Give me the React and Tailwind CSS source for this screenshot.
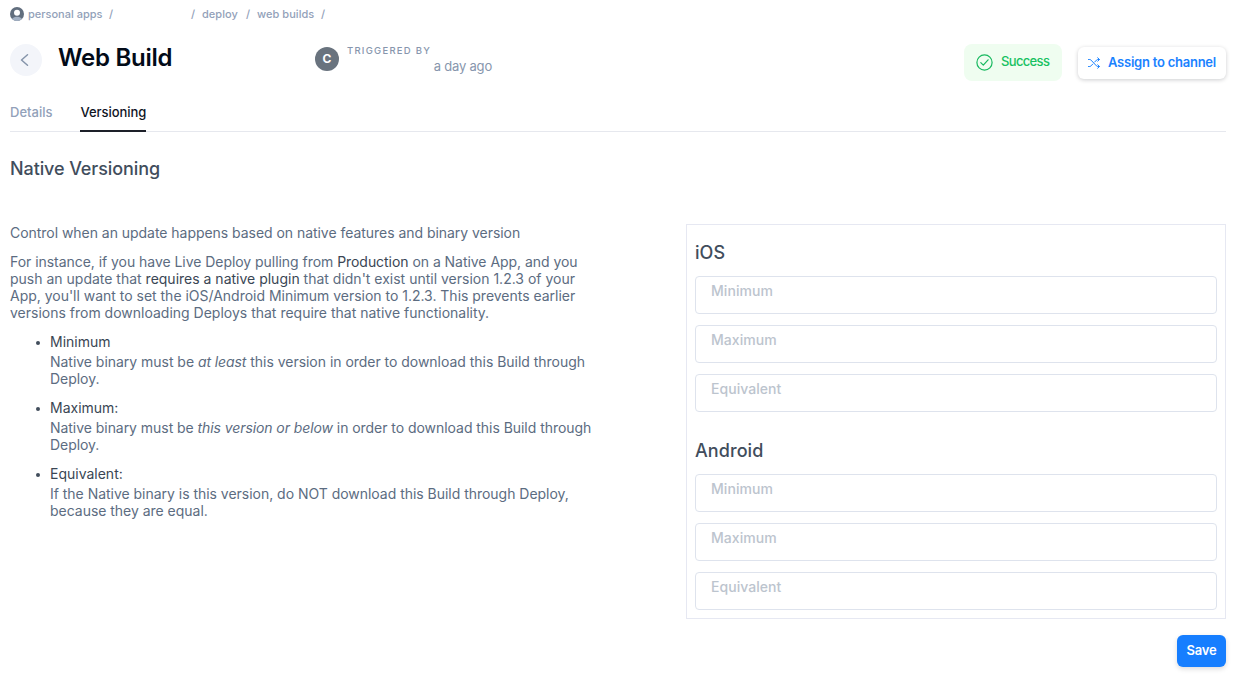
const inputs = ["Minimum", "Maximum", "Equivalent"];

const notes = [
  { title: "Minimum", tracking: "tracking-[-0.03px]", lines: [["Native binary must be ", "at least", " this version in order to download this Build through"], ["Deploy."]] },
  { title: "Maximum:", tracking: "tracking-[-0.045px]", lines: [["Native binary must be ", "this version or below", " in order to download this Build through"], ["Deploy."]] },
  { title: "Equivalent:", tracking: "tracking-[-0.025px]", lines: [["If the Native binary is this version, do NOT download this Build through Deploy,"], ["because they are equal."]] },
];

function UserIcon() {
  return (
    <svg width="14" height="14" viewBox="0 0 14 14" className="mr-1">
      <defs>
        <clipPath id="avatar"><circle cx="7" cy="7" r="7" /></clipPath>
      </defs>
      <g clipPath="url(#avatar)">
        <rect width="14" height="14" fill="#616e7e" />
        <ellipse cx="7" cy="13.2" rx="5.2" ry="3.4" fill="#a3b1c4" />
        <circle cx="7" cy="5.7" r="3" fill="#fff" />
      </g>
    </svg>
  );
}

function ShuffleIcon() {
  return (
    <svg width="14" height="14" viewBox="0 0 14 14" fill="none" stroke="#1a82ff" strokeWidth="1" strokeLinecap="round" strokeLinejoin="round">
      <path d="M1.500 3.500h1.300c.5 0 .8.200 1.200.6l5.500 5.800c.4.400.8.600 1.300.6h1.400M1.500 10.500h1.300c.5 0 .8-.2 1.200-.6l1.700-1.800M7.700 6l1.800-1.900c.4-.4.8-.6 1.300-.6h1.400" />
      <path d="m10.700 1.800 1.800 1.700-1.800 1.700M10.700 8.800l1.800 1.700-1.800 1.700" />
    </svg>
  );
}

function Platform({ name }) {
  return (
    <section>
      <h3 className="mb-[11px] h-6 text-[18px] leading-6 font-medium tracking-[0.08px] text-[#414d5c]">{name}</h3>
      <div className="flex flex-col gap-[11px]">
        {inputs.map((label) => (
          <div key={label} className="h-[38px] rounded-[4px] border border-[#dee3ed] pl-[15px] text-[14px] leading-7 font-medium tracking-[0.05px] text-[#bcc4ce]">
            {label}
          </div>
        ))}
      </div>
    </section>
  );
}

export default function App() {
  return (
    <div className="h-[689px] w-[1248px] overflow-hidden bg-white pr-[22px] pl-[10px] font-['Inter',sans-serif] whitespace-nowrap">
      <nav className="flex h-7 items-center text-[11px] font-medium text-[#92a1b9]">
        <UserIcon />
        <span className="w-[81px]">personal apps</span>
        <span className="w-[82px]">/</span>
        <span className="w-[11px]">/</span>
        <span className="w-11 tracking-[0.05px]">deploy</span>
        <span className="w-[11px]">/</span>
        <span className="w-16 tracking-[0.05px]">web builds</span>
        <span>/</span>
      </nav>

      <header className="flex h-[68px] items-start pt-4">
        <div className="flex h-8 w-8 items-center justify-center rounded-full bg-[#f3f5fa]">
          <svg width="32" height="32" viewBox="0 0 32 32" fill="none" stroke="#8594aa" strokeWidth="1.5" strokeLinecap="round" strokeLinejoin="round">
            <path d="M17.500 10.800 11.500 16l6 5.300" />
          </svg>
        </div>
        <h1 className="ml-4 w-[257px] text-[24px] leading-[28px] font-semibold tracking-[-0.25px] text-[#020b18]">Web Build</h1>
        <div className="mt-[3px] flex h-6 w-6 items-center justify-center rounded-full bg-[#69737e] text-[12px] font-bold text-white">C</div>
        <div className="ml-2 flex w-[145px] flex-col">
          <span className="h-[14px] text-[9.5px] leading-[14px] font-medium tracking-[1.25px] text-[#8796ad]">TRIGGERED BY</span>
          <span className="self-end text-[13px] leading-[17px] tracking-[-0.2px] text-[#8796ad]">a day ago</span>
        </div>
        <div className="ml-auto flex h-[37px] w-[98px] items-center rounded-lg bg-[#effdf0] pl-[12px] text-[13px] font-medium tracking-[-0.6px] text-[#17c161]">
          <svg width="17" height="17" viewBox="0 0 17 17" fill="none" stroke="#17b95f" strokeWidth="1.2" strokeLinecap="round" strokeLinejoin="round">
            <circle cx="8.500" cy="8.500" r="7.600" />
            <path d="m4.800 8.700 2.500 2.500 4.800-5.400" />
          </svg>
          <span className="ml-2 -mt-0.5 tracking-[-0.65px]">Success</span>
        </div>
        <div className="mt-[3px] ml-4 flex h-8 w-[148px] items-center rounded-md bg-white pl-[9px] text-[13px] font-semibold tracking-[-0.24px] text-[#1a82ff] shadow-[0_1px_4px_rgba(2,8,20,0.2)]">
          <ShuffleIcon />
          <span className="ml-[7px]">Assign to channel</span>
        </div>
      </header>

      <div className="flex h-9 gap-7 border-b border-[#e6e8ee] text-[13px] leading-[33px] font-medium">
        <span className="text-[#92a1b9]">Details</span>
        <span className="h-9 border-b-2 border-[#1d2029] tracking-[-0.04px] text-[#10151f]">Versioning</span>
      </div>

      <h2 className="mt-[25px] h-6 text-[18px] leading-6 font-medium tracking-[-0.1px] text-[#414d5c]">Native Versioning</h2>

      <main className="mt-[43px] flex">
        <div className="w-[676px] text-[14px] leading-[17px] text-[#5c6c81]">
          <p className="tracking-[-0.04px]">Control when an update happens based on native features and binary version</p>
          <p className="mt-3">
            <span className="tracking-[-0.045px]">For instance, if you have Live Deploy pulling from <span className="text-[#3a4654]">Production</span> on a Native App, and you</span><br />
            push an update that <span className="text-[#3a4654]">requires a native plugin</span> that didn't exist until version 1.2.3 of your<br />
            <span className="tracking-[-0.015px]">App, you'll want to set the iOS/Android Minimum version to 1.2.3. This prevents earlier</span><br />
            versions from downloading Deploys that require that native functionality.
          </p>
          <ul className="mt-3 flex flex-col gap-3 pl-10">
            {notes.map(({ title, lines, tracking }) => (
              <li key={title}>
                <div className="-ml-[14px] flex items-center text-[#3a4654]">
                  <span className="mt-[3px] mr-[10px] h-1 w-1 rounded-full bg-[#414d5c]" />
                  {title}
                </div>
                <div className={`mt-[3px] ${tracking}`}>
                  {lines.map(([before, em, after]) => (
                    <div key={before}>{before}{em && <em className="tracking-[-0.09px]">{em}</em>}{after}</div>
                  ))}
                </div>
              </li>
            ))}
          </ul>
        </div>
        <div className="flex-1">
          <div className="flex h-[395px] flex-col gap-[27px] border border-[#e6e8f2] px-2 pt-4">
            <Platform name="iOS" />
            <Platform name="Android" />
          </div>
          <div className="mt-4 ml-auto flex h-8 w-[49px] items-center justify-center rounded-md bg-[#167eff] text-[13px] font-semibold tracking-[-0.2px] text-white shadow-[0_2px_5px_rgba(2,8,20,0.15)]">Save</div>
        </div>
      </main>
    </div>
  );
}
